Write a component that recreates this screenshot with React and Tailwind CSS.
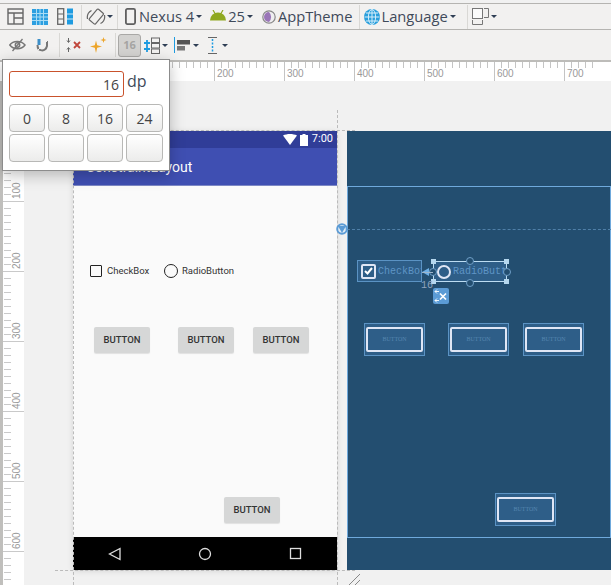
import { Fragment } from 'react'

const ui = { fontFamily: '"Open Sans", "Noto Sans", sans-serif' }
const roboto = { fontFamily: 'Roboto, sans-serif' }
const rulerFont = { fontFamily: '"Liberation Sans", sans-serif' }
const blueprintFont = { fontFamily: '"Liberation Mono", monospace' }

function Caret({ className = '' }) {
  return <span className={`inline-block w-0 h-0 border-x-[3px] border-x-transparent border-t-[3px] border-t-[#2f3f55] ${className}`} />
}

function Sep({ className = '' }) {
  return <span className={`w-px h-[24px] bg-[#d9d8d5] ${className}`} />
}

function DesignIcon() {
  return (
    <svg width="17" height="17" viewBox="0 0 17 17" fill="none" stroke="#666" strokeWidth="1.4">
      <rect x="1" y="1" width="15" height="15" />
      <path d="M1 5h15M7 5v11M7 10h9" />
    </svg>
  )
}

function BlueprintIcon() {
  return (
    <svg width="16" height="16" viewBox="0 0 16 16">
      <rect width="16" height="16" fill="#2d9fe0" />
      <path d="M4.500 0v16M8 0v16M11.500 0v16M0 4.500h16M0 8h16M0 11.500h16" stroke="#a9dcf5" strokeWidth="1" />
    </svg>
  )
}

function SplitIcon() {
  return (
    <svg width="16" height="17" viewBox="0 0 16 17" fill="none">
      <rect x="0.700" y="0.700" width="6" height="15.600" stroke="#666" strokeWidth="1.300" />
      <path d="M1 6h5M1 11h5" stroke="#666" strokeWidth="1.200" />
      <rect x="10" y="0.500" width="6" height="16" fill="#1e9be0" />
      <path d="M10 6h6M10 11h6" stroke="#cde9f8" strokeWidth="1" />
    </svg>
  )
}

function RotateIcon() {
  return (
    <svg width="20" height="18" viewBox="0 0 20 18" fill="none" stroke="#666" strokeWidth="1.200">
      <rect x="6" y="1.500" width="8" height="14" rx="1" transform="rotate(40 10 9)" />
      <path d="M1.500 11a8 8 0 0 1 4-8.500M18.500 7a8 8 0 0 1-4 8.500" />
    </svg>
  )
}

function PhoneIcon() {
  return (
    <svg width="11" height="17" viewBox="0 0 11 17" fill="none">
      <rect x="0.900" y="0.900" width="9.200" height="15.200" rx="1.500" stroke="#5f5f5f" strokeWidth="1.800" />
    </svg>
  )
}

function AndroidIcon() {
  return (
    <svg width="16" height="11" viewBox="0 0 16 11" fill="#8fa81f">
      <path d="M0 10.500a8 8 0 0 1 16 0z" />
      <path d="M3 0l2 3.500M13 0l-2 3.500" stroke="#8fa81f" strokeWidth="1.200" />
    </svg>
  )
}

function ThemeIcon() {
  return (
    <svg width="14" height="14" viewBox="0 0 14 14">
      <circle cx="7" cy="7" r="6.200" fill="#efeef0" stroke="#888" strokeWidth="1.200" />
      <path d="M7 2a5 5 0 0 0 0 10a7 7 0 0 0 0-10z" fill="#9a76b8" />
    </svg>
  )
}

function GlobeIcon() {
  return (
    <svg width="16" height="16" viewBox="0 0 16 16" fill="none">
      <circle cx="8" cy="8" r="8" fill="#2a9fdc" />
      <path d="M0.500 8h15M8 0.500v15M2 4h12M2 12h12" stroke="#d6eefa" strokeWidth="1" />
      <ellipse cx="8" cy="8" rx="3.600" ry="7.500" stroke="#d6eefa" strokeWidth="1" />
    </svg>
  )
}

function ScreenIcon() {
  return (
    <svg width="18" height="17" viewBox="0 0 18 17" fill="none" stroke="#777" strokeWidth="1">
      <rect x="0.500" y="0.500" width="10" height="10" fill="#fbfbfb" />
      <path d="M12 0.500h4.500v9H12M0.500 12v4.500h10V12" />
    </svg>
  )
}

function EyeIcon() {
  return (
    <svg width="17" height="14" viewBox="0 0 17 14" fill="none" stroke="#777" strokeWidth="1.500">
      <path d="M0.800 7C4 2.500 12 2 16 7c-3.500 5-11.500 5-15.200 0z" />
      <circle cx="8.500" cy="7" r="2.200" />
      <path d="M3.500 13L13.500 1" strokeWidth="1.300" />
    </svg>
  )
}

function PenIcon() {
  return (
    <svg width="13" height="15" viewBox="0 0 13 15" fill="none">
      <path d="M3 1v6" stroke="#3d8fc8" strokeWidth="3" />
      <path d="M1.500 7c0 7 8 7 9.500 1V3" stroke="#777" strokeWidth="2" />
      <path d="M0 14L12 2" stroke="#f2f1f0" strokeWidth="1" />
    </svg>
  )
}

function ClearIcon() {
  return (
    <svg width="16" height="16" viewBox="0 0 16 16" fill="none">
      <path d="M8 5l6 6M14 5l-6 6" stroke="#c0463b" strokeWidth="1.800" />
      <path d="M2.500 1v4M1 3.500l1.500 2 1.500-2M2.500 15v-4M1 12.500l1.500-2 1.500 2" stroke="#666" strokeWidth="1" />
    </svg>
  )
}

function SparkleIcon() {
  return (
    <svg width="17" height="17" viewBox="0 0 17 17" fill="#eda529">
      <path d="M6 3.500L7.200 8.300 12 9.500 7.200 10.700 6 16 4.800 10.700 0 9.500 4.800 8.300z" />
      <path d="M13.500 0L14.200 2.300 16.500 3 14.200 3.700 13.500 6 12.800 3.700 10.500 3 12.800 2.300z" />
    </svg>
  )
}

function MarginListIcon() {
  return (
    <svg width="16" height="17" viewBox="0 0 16 17" fill="none">
      <rect x="7.500" y="1" width="8" height="4.500" stroke="#666" />
      <rect x="7.500" y="6.500" width="8" height="4.500" stroke="#666" />
      <rect x="7.500" y="12" width="8" height="4.500" stroke="#666" />
      <path d="M0 6h6M3 3v6M0 12h6M3 9v6" stroke="#1e9be0" strokeWidth="1.800" />
    </svg>
  )
}

function AlignIcon() {
  return (
    <svg width="17" height="16" viewBox="0 0 17 16">
      <rect x="0" y="0" width="1" height="16" fill="#1e9be0" />
      <rect x="3" y="3" width="13" height="4.500" fill="#555" />
      <rect x="3" y="9" width="8" height="4.500" fill="#777" />
    </svg>
  )
}

function GuideIcon() {
  return (
    <svg width="9" height="17" viewBox="0 0 9 17" fill="none">
      <path d="M0 0.500h9M0 16.500h9" stroke="#666" />
      <path d="M4.500 2v13" stroke="#1e9be0" strokeDasharray="2 1.500" strokeWidth="1.500" />
    </svg>
  )
}

function TopToolbar() {
  return (
    <div className="h-[27px] mt-[3px] border-y border-[#b5b4b1] bg-[#f2f1f0] flex items-center text-[14.7px] text-[#3f4a5a]" style={ui}>
      <span className="ml-[7px]"><DesignIcon /></span>
      <span className="ml-[8px]"><BlueprintIcon /></span>
      <span className="ml-[9px]"><SplitIcon /></span>
      <Sep className="ml-[8px]" />
      <span className="ml-[4px]"><RotateIcon /></span>
      <Caret className="ml-[1px]" />
      <Sep className="ml-[4px]" />
      <span className="ml-[7px]"><PhoneIcon /></span>
      <span className="ml-[3px]">Nexus 4</span>
      <Caret className="ml-[2px]" />
      <span className="ml-[8px] mb-[3px]"><AndroidIcon /></span>
      <span className="ml-[2px]">25</span>
      <Caret className="ml-[2px]" />
      <span className="ml-[9px]"><ThemeIcon /></span>
      <span className="ml-[2px]">AppTheme</span>
      <Sep className="ml-[7px]" />
      <span className="ml-[4px]"><GlobeIcon /></span>
      <span className="ml-[1px]">Language</span>
      <Caret className="ml-[2px]" />
      <Sep className="ml-[11px]" />
      <span className="ml-[4px]"><ScreenIcon /></span>
      <Caret className="ml-[1px]" />
    </div>
  )
}

function SecondToolbar() {
  return (
    <div className="h-[30px] bg-[#f2f1f0] flex items-center">
      <span className="ml-[9px]"><EyeIcon /></span>
      <span className="ml-[10px]"><PenIcon /></span>
      <Sep className="ml-[10px]" />
      <span className="ml-[6px]"><ClearIcon /></span>
      <span className="ml-[8px]"><SparkleIcon /></span>
      <Sep className="ml-[8px]" />
      <span className="ml-[2px] w-[23px] h-[23px] rounded-[3px] border border-[#a9a8a6] bg-[#d3d2d0] flex items-center justify-center text-[11px] font-bold text-[#a5a4a2]" style={ui}>16</span>
      <span className="ml-[3px]"><MarginListIcon /></span>
      <Caret className="ml-[2px]" />
      <span className="ml-[6px]"><AlignIcon /></span>
      <Caret className="ml-[2px]" />
      <span className="ml-[9px]"><GuideIcon /></span>
      <Caret className="ml-[5px]" />
    </div>
  )
}

function MarginPopup() {
  const rows = [['0', '8', '16', '24'], ['', '', '', '']]
  return (
    <div className="absolute left-[2px] top-[59px] w-[168px] h-[112px] bg-white border border-[#8c8c8c] z-30 shadow-[0_4px_14px_rgba(0,0,0,0.25)]" style={ui}>
      <div className="ml-[6px] mt-[11px] flex">
        <div className="w-[115px] h-[26px] border border-[#c9522c] rounded-[3px] text-right pr-[4px] text-[14px] leading-[26px] text-[#444]">16</div>
        <span className="ml-[3px] text-[16px] leading-[20px] text-[#3f4a5a]">dp</span>
      </div>
      <div className="ml-[6px] mt-[7px] grid grid-cols-[36px_36px_36px_37px] gap-x-[3px] gap-y-[2px]">
        {rows.map((row, i) => (
          <Fragment key={i}>
            {row.map((label, j) => (
              <div key={j} className="h-[28px] rounded-[4px] border border-[#b8b8b6] bg-gradient-to-b from-white to-[#ececeb] flex items-center justify-center text-[14px] text-[#444]">
                {label}
              </div>
            ))}
          </Fragment>
        ))}
      </div>
    </div>
  )
}

function TopRuler() {
  const ticks = Array.from({ length: 85 }, (_, i) => i)
  const labels = [100, 200, 300, 400, 500, 600, 700]
  return (
    <div className="relative h-[21px] bg-white border-t-2 border-[#bdbcb9] overflow-hidden">
      {ticks.map(i => (
        <span key={i} className="absolute top-0 w-px h-[6px] bg-[#c4c4c4]" style={{ left: 4 + i * 7 }} />
      ))}
      {labels.map(n => (
        <span key={n} className="absolute top-0 h-[19px] border-l border-[#c4c4c4] pl-[2px] pt-[5px] text-[10px] leading-[14px] text-[#999]" style={{ left: 144 + (n - 100) * 0.7, ...rulerFont }}>
          {n}
        </span>
      ))}
    </div>
  )
}

function LeftRuler() {
  const ticks = Array.from({ length: 74 }, (_, i) => i)
  const labels = [100, 200, 300, 400, 500, 600]
  return (
    <div className="relative w-[24px] shrink-0 border-l-[3px] border-[#c0bfbc] bg-white overflow-hidden">
      {ticks.map(i => (
        <span key={i} className="absolute left-[1px] h-px w-[7px] bg-[#c9c9c9]" style={{ top: i * 7 + 1 }} />
      ))}
      {labels.map(n => (
        <Fragment key={n}>
          <span className="absolute left-0 w-[21px] h-px bg-[#c9c9c9]" style={{ top: 120 + (n - 100) * 0.7 }} />
          <span className="absolute left-[7px] w-[14px] h-[18px] text-[10px] leading-[14px] text-[#999] [writing-mode:vertical-rl] rotate-180" style={{ top: 100 + (n - 100) * 0.7, ...rulerFont }}>
            {n}
          </span>
        </Fragment>
      ))}
    </div>
  )
}

function WifiGlyph() {
  return (
    <svg width="14" height="11" viewBox="0 0 14 11" fill="#fff"><path d="M0 1.500C4-.5 10-.5 14 1.500L7 11z" /></svg>
  )
}

function BatteryGlyph() {
  return (
    <svg width="8" height="12" viewBox="0 0 8 12" fill="#fff"><path d="M2.500 0h3v1H8v11H0V1h2.500z" /></svg>
  )
}

function PhoneScreen() {
  const buttons = [
    { left: 21, top: 141 },
    { left: 105, top: 141 },
    { left: 180, top: 141 },
    { left: 151, top: 311 },
  ]
  return (
    <div className="w-[264px] shrink-0 flex flex-col shadow-[0_1px_6px_rgba(0,0,0,0.12)]" style={roboto}>
      <div className="h-[17px] bg-[#303d98] flex items-center justify-end gap-[3px] pr-[4px] text-white text-[11px]">
        <WifiGlyph />
        <BatteryGlyph />
        <span className="ml-[1px]">7:00</span>
      </div>
      <div className="h-[38px] bg-[#3f4fb2] border-b border-[#7d88c4] pl-[13px] pt-[9px] text-[14px] leading-[20px] text-white">ConstraintLayout</div>
      <div className="relative h-[351px] bg-[#fafafa] text-[#333]">
        <span className="absolute left-[17px] top-[79px] w-[12px] h-[12px] border-[1.500px] border-[#222] rounded-[1px]" />
        <span className="absolute left-[34px] top-[78px] text-[9.500px] leading-[14px]">CheckBox</span>
        <span className="absolute left-[91px] top-[78px] w-[14px] h-[14px] border-[1.500px] border-[#222] rounded-full" />
        <span className="absolute left-[109px] top-[78px] text-[9.500px] leading-[14px]">RadioButton</span>
        {buttons.map((b, i) => (
          <div key={i} className="absolute w-[56px] h-[26px] bg-[#d6d7d7] rounded-[2px] shadow-[0_1px_1px_rgba(0,0,0,0.1)] flex items-center justify-center text-[9.500px] font-medium" style={{ left: b.left, top: b.top }}>
            BUTTON
          </div>
        ))}
      </div>
      <div className="h-[33px] bg-black flex items-center">
        <svg width="264" height="33" viewBox="0 0 264 33" fill="none" stroke="#ddd" strokeWidth="1.300">
          <path d="M47 11.500L36.500 17 47 22.500z" />
          <circle cx="132" cy="17" r="5.500" />
          <rect x="217.500" y="11.500" width="10" height="10" />
        </svg>
      </div>
    </div>
  )
}

function BlueprintButton({ left, top }) {
  return (
    <div className="absolute w-[61px] h-[33px] border border-[#5b93c4] bg-[#2e5e88] p-[1px] pb-[3px] pt-[3px]" style={{ left, top }}>
      <div className="w-full h-full border-2 border-[#dfe6f5] rounded-[2px] flex items-center justify-center text-[6px] text-[#5686b0]" style={{ fontFamily: '"Liberation Serif", serif' }}>
        BUTTON
      </div>
    </div>
  )
}

function Blueprint() {
  const corners = ['left-[-3px] top-[-3px]', 'right-[-3px] top-[-3px]', 'left-[-3px] bottom-[-3px]', 'right-[-3px] bottom-[-3px]']
  const anchors = [
    { left: 32, top: -5 },
    { left: 69, top: 6 },
    { left: 32, top: 17 },
    { left: -5, top: 6 },
  ]
  return (
    <div className="relative flex-1 bg-[#234e70] overflow-hidden" style={blueprintFont}>
      <div className="absolute left-0 right-0 top-[55px] h-[352px] border border-[#6fa9dc]" />
      <div className="absolute left-0 right-0 top-[98px] border-t border-dashed border-[#4f7fa8]" />

      <div className="absolute left-[10px] top-[129px] w-[65px] h-[22px] border border-[#5b93c4] bg-[#2e5e88] flex items-center text-[10px] text-[#5f95c6] overflow-hidden">
        <span className="ml-[3px] w-[15px] h-[15px] rounded-[2px] border-2 border-[#dfe6f5] flex items-center justify-center shrink-0">
          <svg width="9" height="8" viewBox="0 0 9 8" fill="none" stroke="#fff" strokeWidth="2"><path d="M1 4l2.500 2.500L8 1" /></svg>
        </span>
        <span className="ml-[2px]">CheckBox</span>
      </div>

      <div className="absolute left-[86px] top-[130px] w-[74px] h-[21px] border border-[#bcdcf2] bg-[#2e5e88] flex items-center text-[10px] text-[#5f95c6]">
        <span className="ml-[3px] w-[14px] h-[14px] rounded-full border-2 border-[#dfe6f5] shrink-0" />
        <span className="ml-[2px] w-[53px] overflow-hidden whitespace-nowrap">RadioButton</span>
        {corners.map(c => (
          <span key={c} className={`absolute w-[5px] h-[5px] bg-[#b5d7ee] ${c}`} />
        ))}
        {anchors.map((a, i) => (
          <span key={i} className="absolute w-[8px] h-[8px] rounded-full border border-[#6f9fc8] bg-[#234e70]" style={{ left: a.left, top: a.top }} />
        ))}
      </div>

      <span className="absolute left-[75px] top-[137px] w-0 h-0 border-y-[4px] border-y-transparent border-r-[7px] border-r-[#6fb0e6]" />
      <span className="absolute left-[75px] top-[141px] w-[11px] border-t border-[#9fb6cc]" />
      <span className="absolute left-[74px] top-[149px] text-[10px] leading-[12px] text-[#8fa3bd]">16</span>
      <div className="absolute left-[86px] top-[157px] w-[16px] h-[16px] rounded-[2px] bg-[#5b9bd5]">
        <svg width="16" height="16" viewBox="0 0 16 16" fill="none" stroke="#fff">
          <path d="M7 5.500l6 6M13 5.500l-6 6" strokeWidth="1.700" />
          <path d="M6 3.500H2M4 1.500l-2 2 2 2M6 12.500H2M4 10.500l-2 2 2 2" strokeWidth="0.900" />
        </svg>
      </div>

      <BlueprintButton left={17} top={192} />
      <BlueprintButton left={101} top={192} />
      <BlueprintButton left={176} top={192} />
      <BlueprintButton left={148} top={362} />
    </div>
  )
}

function Canvas() {
  return (
    <div className="relative flex-1 bg-[#f1f1f1] overflow-hidden">
      <div className="flex pl-[49px] pt-[50px] gap-[10px] h-[489px]">
        <PhoneScreen />
        <Blueprint />
      </div>
      {/* resize guides */}
      <span className="absolute left-[49px] top-[29px] bottom-0 border-l border-dashed border-[#bbb] z-10" />
      <span className="absolute left-[313px] top-[29px] bottom-0 border-l border-dashed border-[#bbb] z-10" />
      <span className="absolute left-[31px] w-[300px] top-[49px] border-t border-dashed border-[#bbb] z-10" />
      <span className="absolute left-[31px] w-[300px] top-[489px] border-t border-dashed border-[#bbb] z-10" />
      <svg className="absolute left-[324px] top-[493px]" width="12" height="12" viewBox="0 0 12 12" stroke="#888">
        <path d="M0 12L12 0M6 12L12 6" />
      </svg>
      <svg className="absolute left-[312px] top-[142px] z-20" width="12" height="12" viewBox="0 0 12 12" fill="none">
        <circle cx="6" cy="6" r="4.800" fill="#e3edf5" stroke="#5b9bd5" strokeWidth="2" />
        <path d="M2 3h8L6 10z" fill="#5b9bd5" />
      </svg>
    </div>
  )
}

export default function App() {
  return (
    <div className="relative w-[611px] h-[585px] overflow-hidden flex flex-col bg-[#f1f1f1]">
      <TopToolbar />
      <SecondToolbar />
      <TopRuler />
      <div className="flex flex-1 min-h-0">
        <LeftRuler />
        <Canvas />
      </div>
      <MarginPopup />
    </div>
  )
}
